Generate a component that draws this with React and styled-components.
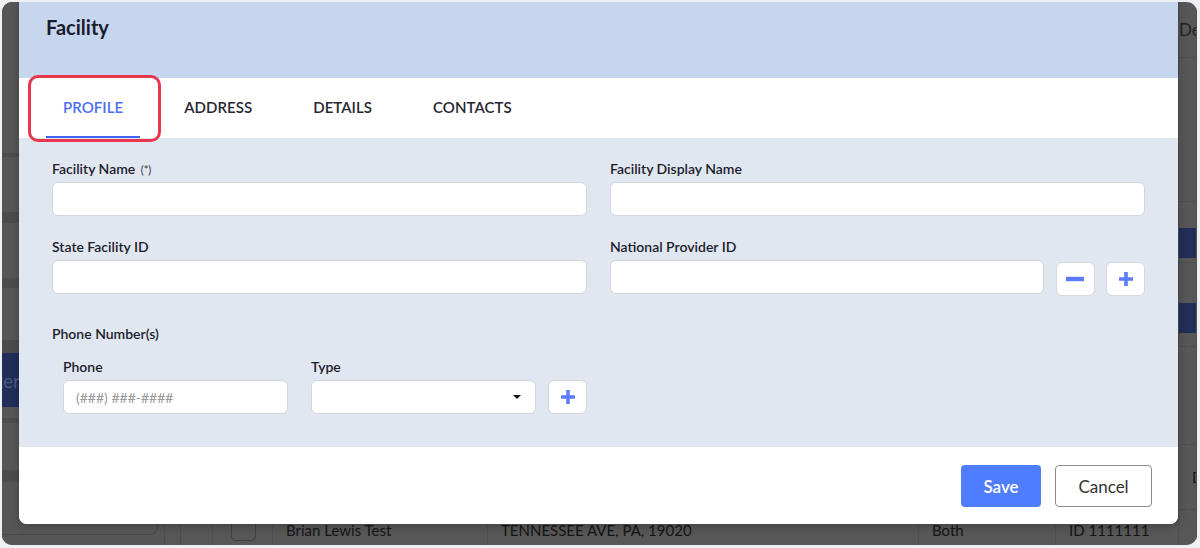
import React from "react";
import styled, { createGlobalStyle } from "styled-components";

const GlobalStyle = createGlobalStyle`
  * { box-sizing: border-box; }
  body {
    margin: 0;
    background: #eef0f3;
    font-family: Lato, "Open Sans", "Liberation Sans", sans-serif;
  }
`;

const tableCols = "32px 60px 215px 431px 137px 123px 1fr";

// left navigation rows, h = row height, line = bottom rule
const sideRows = [
  { h: 155, line: 4 },
  { h: 66, line: 11 },
  { h: 65, line: 10 },
  { h: 65, line: 13 },
  { h: 54, navy: true, text: "Manager" },
  { h: 16, line: 5 },
  { h: 59, line: 12 },
];

const backRows = [
  { h: 56, kind: "head", text: "Department" },
  { h: 144 },
  { h: 61, kind: "chip", top: 26 },
  { h: 84, kind: "chip", top: 40, text: "F" },
  { h: 98 },
  { h: 65, kind: "text", text: "D" },
];

const renderLast = (r) => {
  if (r.kind === "head") return <HeadCell>{r.text}</HeadCell>;
  if (r.kind === "chip") return <NavyChip $top={r.top}>{r.text}</NavyChip>;
  if (r.kind === "text") return <BackText>{r.text}</BackText>;
  return null;
};

const App = () => {
  return (
    <Screen>
      <GlobalStyle />
      <Frame>
        <Backdrop>
          <Sidebar>
            {sideRows.map((r, i) => (
              <SideRow key={i} $h={r.h} $line={r.line} $navy={r.navy}>
                {r.text}
              </SideRow>
            ))}
            <SideCard />
          </Sidebar>
          <Content>
            {backRows.map((r, i) => (
              <BackRow key={i} $h={r.h}>
                <span />
                <span />
                <span />
                <span />
                <span />
                <span />
                <LastCell>{renderLast(r)}</LastCell>
              </BackRow>
            ))}
            <BackRow $h={40}>
              <span />
              <CheckCell>
                <BackCheck />
              </CheckCell>
              <BackText>Brian Lewis Test</BackText>
              <BackText>TENNESSEE AVE, PA, 19020</BackText>
              <BackText>Both</BackText>
              <BackText>ID 1111111</BackText>
              <span />
            </BackRow>
          </Content>
        </Backdrop>

        <Modal>
          <ModalHeader>
            <Title>Facility</Title>
          </ModalHeader>

          <Tabs>
            <Tab $active>PROFILE</Tab>
            <Tab>ADDRESS</Tab>
            <Tab>DETAILS</Tab>
            <Tab>CONTACTS</Tab>
          </Tabs>
          <Highlight />

          <Body>
            <FieldGrid>
              <Field>
                <Label>
                  Facility Name <Req>(*)</Req>
                </Label>
                <Input />
              </Field>
              <Field>
                <Label>Facility Display Name</Label>
                <Input />
              </Field>
              <Field>
                <Label>State Facility ID</Label>
                <Input />
              </Field>
              <Field>
                <Label>National Provider ID</Label>
                <InputRow>
                  <Input />
                  <IconButton aria-label="remove">
                    <Minus />
                  </IconButton>
                  <IconButton aria-label="add">
                    <Plus />
                  </IconButton>
                </InputRow>
              </Field>
            </FieldGrid>

            <PhoneSection>
              <Label>Phone Number(s)</Label>
              <PhoneRow>
                <Field $w={225} $mr={23}>
                  <Label>Phone</Label>
                  <Input placeholder="(###) ###-####" />
                </Field>
                <Field $w={225} $mr={12}>
                  <Label>Type</Label>
                  <Select>
                    <Caret />
                  </Select>
                </Field>
                <IconButton aria-label="add phone">
                  <Plus />
                </IconButton>
              </PhoneRow>
            </PhoneSection>
          </Body>

          <Footer>
            <SaveButton>Save</SaveButton>
            <CancelButton>Cancel</CancelButton>
          </Footer>
        </Modal>
      </Frame>
    </Screen>
  );
};

export default App;

const Plus = () => (
  <svg width="16" height="16" viewBox="0 0 16 16">
    <path d="M8 1v14M1 8h14" stroke="#5b7cff" strokeWidth="3.6" />
  </svg>
);

const Minus = () => (
  <svg width="18" height="16" viewBox="0 0 18 16">
    <path d="M0 8h18" stroke="#5b7cff" strokeWidth="4.4" />
  </svg>
);

const Screen = styled.div`
  width: 1200px;
  height: 548px;
  padding: 2px 3px 3px 2px;
`;

const Frame = styled.div`
  position: relative;
  width: 1195px;
  height: 543px;
  border-radius: 10px;
  overflow: hidden;
  background: #575757;
`;

/* dimmed page behind the dialog */
const Backdrop = styled.div`
  display: flex;
  height: 100%;
`;

const Sidebar = styled.div`
  width: 163px;
  display: flex;
  flex-direction: column;
  background: #565656;
  border-right: 1px solid #4d4d4d;
`;

const SideRow = styled.div`
  height: ${(p) => p.$h}px;
  flex-shrink: 0;
  border-bottom: ${(p) => (p.$line ? `${p.$line}px solid #4c4c4c` : "none")};
  background: ${(p) => (p.$navy ? "#212e58" : "transparent")};
  color: #4d5a80;
  font-size: 19px;
  display: flex;
  align-items: center;
  justify-content: flex-end;
  padding-right: 144px;
  white-space: nowrap;
  overflow: hidden;
`;

const SideCard = styled.div`
  height: 53px;
  margin-right: 6px;
  border: 1px solid #4a4a4a;
  border-top: none;
  border-left: none;
  border-radius: 0 0 8px 0;
`;

const Content = styled.div`
  flex: 1;
  margin-left: 15px;
  display: flex;
  flex-direction: column;
  border-left: 1px solid #4d4d4d;
`;

const BackRow = styled.div`
  display: grid;
  grid-template-columns: ${tableCols};
  height: ${(p) => p.$h}px;
  flex-shrink: 0;
  border-bottom: 1px solid #4e4e4e;
  align-items: center;

  & > * {
    height: 100%;
    border-right: 1px solid #4f4f4f;
  }
`;

const LastCell = styled.div`
  display: flex;
  align-items: center;
  overflow: hidden;
`;

const HeadCell = styled.span`
  font-size: 17px;
  color: #222;
  white-space: nowrap;
  padding-left: 0;
`;

const NavyChip = styled.div`
  width: 100%;
  height: 30px;
  margin-top: ${(p) => p.$top || 26}px;
  align-self: flex-start;
  background: #212e58;
  color: #5b6a8e;
  font-size: 17px;
  line-height: 30px;
  padding-left: 20px;
`;

const BackText = styled.div`
  display: flex;
  align-items: center;
  padding-left: 13px;
  font-size: 15px;
  color: #141414;
  white-space: nowrap;
`;

const CheckCell = styled.div`
  display: flex;
  align-items: center;
  padding-left: 18px;
`;

const BackCheck = styled.div`
  width: 25px;
  height: 22px;
  border: 1px solid #3f3f3f;
  border-radius: 5px;
`;

/* dialog */
const Modal = styled.div`
  position: absolute;
  left: 17px;
  top: 0;
  width: 1159px;
  border-radius: 0 0 8px 8px;
  overflow: hidden;
  background: #fff;
  box-shadow: 0 2px 8px rgba(0, 0, 0, 0.25);
`;

const ModalHeader = styled.div`
  height: 76px;
  background: #c5d6ee;
  padding: 13px 27px;
`;

const Title = styled.h2`
  margin: 0;
  font-size: 20px;
  line-height: 24px;
  font-weight: 700;
  color: #1b1b2e;
`;

const Tabs = styled.div`
  height: 60px;
  display: flex;
  gap: 27px;
  padding: 0 27px;
  background: #fff;
`;

const Tab = styled.div`
  display: flex;
  align-items: center;
  padding: 0 17px;
  font-size: 15px;
  font-weight: 600;
  letter-spacing: 0.05px;
  color: ${(p) => (p.$active ? "#4c6ef5" : "#262633")};
  border-bottom: 2px solid ${(p) => (p.$active ? "#3d64f0" : "transparent")};
`;

const Highlight = styled.div`
  position: absolute;
  left: 9px;
  top: 73px;
  width: 133px;
  height: 67px;
  border: 3px solid #e8364c;
  border-radius: 10px;
  pointer-events: none;
`;

const Body = styled.div`
  background: #e1e7f0;
  padding: 22px 33px 33px;
`;

const FieldGrid = styled.div`
  display: grid;
  grid-template-columns: 1fr 1fr;
  column-gap: 23px;
  row-gap: 22px;
`;

const Field = styled.div`
  display: flex;
  flex-direction: column;
  gap: 4px;
  width: ${(p) => (p.$w ? `${p.$w}px` : "auto")};
  margin-right: ${(p) => p.$mr || 0}px;
`;

const Label = styled.label`
  display: block;
  font-size: 14px;
  line-height: 18px;
  font-weight: 600;
  color: #1c1c2c;
`;

const Req = styled.span`
  font-size: 11px;
  line-height: 1;
  font-weight: 400;
  color: #333;
  margin-left: 2px;
`;

const Input = styled.input`
  width: 100%;
  height: 34px;
  border: 1px solid #d3d7dd;
  border-radius: 6px;
  background: #fff;
  padding: 0 12px;
  font-family: inherit;
  font-size: 14px;
  color: #333;
  outline: none;

  &::placeholder {
    color: #9a9a9a;
  }
`;

const InputRow = styled.div`
  display: flex;
  gap: 11.5px;
  align-items: flex-end;

  & > input {
    flex: 1;
  }
`;

const IconButton = styled.button`
  width: 39px;
  height: 34px;
  flex-shrink: 0;
  margin-bottom: -2px;
  align-self: flex-end;
  display: flex;
  align-items: center;
  justify-content: center;
  padding: 0;
  background: #fff;
  border: 1px solid #d5d8dd;
  border-radius: 6px;
`;

const PhoneSection = styled.div`
  margin-top: 31px;
  width: 535px;
`;

const PhoneRow = styled.div`
  display: flex;
  align-items: flex-end;
  margin-top: 15px;
  padding-left: 11px;

  & > button {
    margin-bottom: 0;
  }
`;

const Select = styled.div`
  height: 34px;
  border: 1px solid #d3d7dd;
  border-radius: 6px;
  background: #fff;
  display: flex;
  align-items: center;
  justify-content: flex-end;
  padding-right: 14px;
`;

const Caret = styled.span`
  width: 0;
  height: 0;
  border-left: 4px solid transparent;
  border-right: 4px solid transparent;
  border-top: 4px solid #111;
`;

const Footer = styled.div`
  background: #fff;
  padding: 18px 26px 17px;
  display: flex;
  justify-content: flex-end;
  gap: 14px;
`;

const SaveButton = styled.button`
  width: 80px;
  height: 42px;
  border: none;
  border-radius: 4px;
  background: #4f7dff;
  color: #fff;
  font-family: inherit;
  font-size: 17px;
  font-weight: 600;
`;

const CancelButton = styled.button`
  width: 97px;
  height: 42px;
  border: 1px solid #8c8c8c;
  border-radius: 4px;
  background: #fff;
  color: #333;
  font-family: inherit;
  font-size: 17px;
`;
